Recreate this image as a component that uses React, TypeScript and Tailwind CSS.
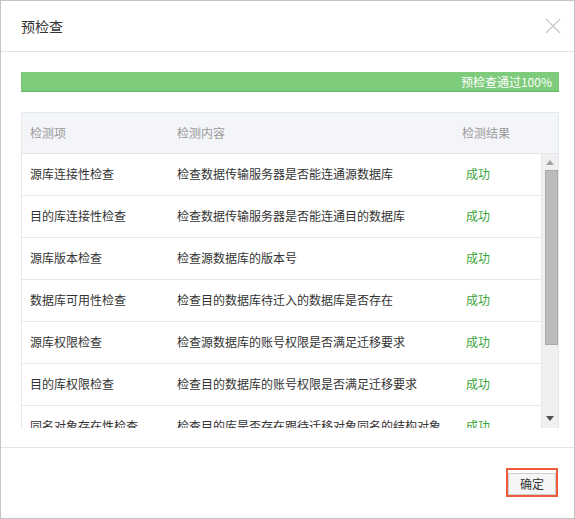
import React from 'react';

const checks = [
  { item: '源库连接性检查', content: '检查数据传输服务器是否能连通源数据库' },
  { item: '目的库连接性检查', content: '检查数据传输服务器是否能连通目的数据库' },
  { item: '源库版本检查', content: '检查源数据库的版本号' },
  { item: '数据库可用性检查', content: '检查目的数据库待迁入的数据库是否存在' },
  { item: '源库权限检查', content: '检查源数据库的账号权限是否满足迁移要求' },
  { item: '目的库权限检查', content: '检查目的数据库的账号权限是否满足迁移要求' },
  { item: '同名对象存在性检查', content: '检查目的库是否存在跟待迁移对象同名的结构对象' },
  { item: '源库binlog检查', content: '检查源数据库的binlog是否开启' },
  { item: '源库存储引擎检查', content: '检查源库待迁移的表的存储引擎' },
];

const App: React.FC = () => {
  return (
    <div className="w-[575px] h-[519px] bg-white border border-[#c4c4c4] flex flex-col font-['Noto_Sans_CJK_SC',sans-serif] text-[#333]">
      {/* Header */}
      <div className="h-[51px] flex items-center justify-between pl-[20px] pr-[13px] border-b border-[#e3e3e3] shrink-0">
        <span className="text-[14px] leading-none">预检查</span>
        <svg width="16" height="16" viewBox="0 0 16 16" className="mb-[1px]">
          <path d="M1 1 L15 15 M15 1 L1 15" stroke="#c8c8c8" strokeWidth="1.3" fill="none" />
        </svg>
      </div>

      {/* Body */}
      <div className="pl-[20px] pr-[15px] pt-[20px] flex-1 min-h-0">
        <div className="h-[20px] bg-[#7dcb7b] border-b border-[#62b562] flex items-center justify-end pr-[7px]">
          <span className="text-white text-[12px] leading-none">预检查通过100%</span>
        </div>

        <div className="mt-[20px] border-x border-t border-[#e3e8ee] text-[12px]">
          <div className="h-[41px] bg-[#f3f5f9] border-b border-[#e3e8ee] flex items-center text-[#9a9a9a]">
            <div className="w-[147px] pl-[8px]">检测项</div>
            <div className="w-[285px] pl-[8px]">检测内容</div>
            <div className="flex-1 pl-[8px]">检测结果</div>
          </div>
          <div className="h-[274px] flex">
            <div className="flex-1 overflow-hidden">
              {checks.map((c) => (
                <div key={c.item} className="h-[42px] pb-[2px] border-b border-[#e3e8ee] flex items-center">
                  <div className="w-[147px] pl-[8px] whitespace-nowrap">{c.item}</div>
                  <div className="w-[285px] pl-[8px] whitespace-nowrap">{c.content}</div>
                  <div className="flex-1 pl-[12px] text-[#3aa63a]">成功</div>
                </div>
              ))}
            </div>
            {/* Scrollbar */}
            <div className="w-[17px] bg-[#f0f0f0] border-l border-[#e6e6e6] flex flex-col items-center">
              <div className="h-[16px] flex items-center justify-center">
                <svg width="8" height="5" viewBox="0 0 8 5"><path d="M4 0 L8 5 L0 5 Z" fill="#a3a3a3" /></svg>
              </div>
              <div className="w-[13px] h-[175px] bg-[#bcbcbc] border border-[#a9a9a9] ml-[2px]" />
              <div className="flex-1" />
              <div className="h-[20px] flex items-center justify-center">
                <svg width="8" height="5" viewBox="0 0 8 5"><path d="M0 0 L8 0 L4 5 Z" fill="#505050" /></svg>
              </div>
            </div>
          </div>
        </div>
      </div>

      {/* Footer */}
      <div className="h-[71px] border-t border-[#e3e3e3] flex items-start justify-end pt-[20px] pr-[16px] shrink-0">
        <div className="border-[2px] border-[#f05a3c]">
          <button className="w-[48px] h-[22px] border border-[#cfcfcf] bg-[#f6f6f6] text-[12px] leading-none text-[#333]">
            确定
          </button>
        </div>
      </div>
    </div>
  );
};

export default App;
